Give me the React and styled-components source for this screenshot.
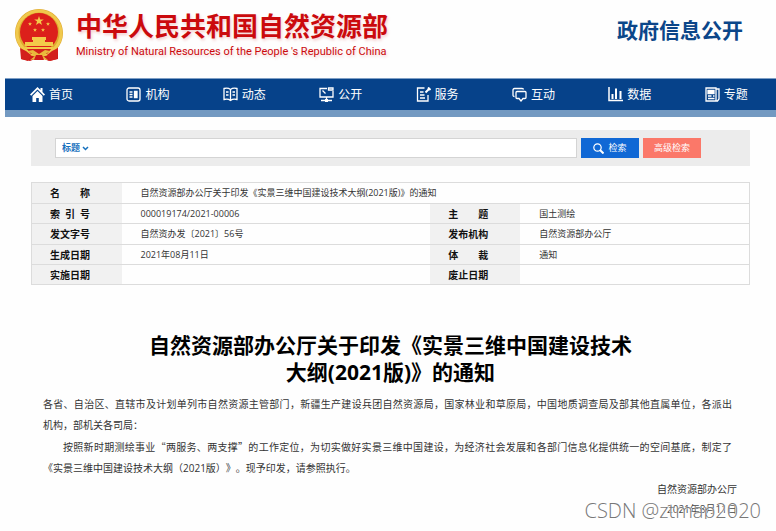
import React from "react";
import styled, { createGlobalStyle } from "styled-components";

const GlobalStyle = createGlobalStyle`
  *, *::before, *::after { box-sizing: border-box; }
  body {
    margin: 0;
    background: #fefefe;
    color: #333;
    font-family: "Open Sans", "Noto Sans CJK SC", sans-serif;
    text-spacing-trim: space-all;
  }
  button, input, select { font: inherit; }
`;

const Page = styled.div`
  padding-left: 5px;
`;

const Header = styled.header`
  display: flex;
  align-items: flex-start;
  height: 78px;
  padding: 8px 33px 0 8px;
`;

const Brand = styled.div`
  flex: 1;
  margin-left: 11px;
  color: #cb0a0d;
  text-shadow: 1px 2px 3px #cb0a0d30;
  white-space: nowrap;
`;

const Ministry = styled.h1`
  margin: 0;
  font-size: 26px;
  line-height: 36px;
  font-weight: 700;
`;

const MinistryEnglish = styled.p`
  margin: 0;
  font-family: Roboto, sans-serif;
  font-size: 11px;
  line-height: 16px;
`;

const Section = styled.p`
  margin: 7px 0 0;
  color: #0b4689;
  font-size: 21px;
  line-height: 30px;
  font-weight: 700;
  white-space: nowrap;
`;

const Nav = styled.nav`
  display: grid;
  grid-template-columns: repeat(8, 1fr);
  height: 39px;
  background: #06428a;
  border-top: 1px solid #7f9fc5;
  border-bottom: 7px solid #7399c1;
`;

const NavLink = styled.a`
  display: flex;
  align-items: center;
  gap: 4px;
  padding-left: 25px;
  color: #fff;
  font-size: 12px;
  line-height: 18px;
  text-decoration: none;
  white-space: nowrap;
`;

const Content = styled.main`
  padding: 13px 26px 0;
`;

const SearchBar = styled.form`
  display: flex;
  align-items: center;
  gap: 4px;
  height: 36px;
  padding: 0 49px 0 24px;
  background: #ececec;
`;

const Field = styled.div`
  display: flex;
  align-items: center;
  flex: 1;
  height: 20px;
  padding-left: 6px;
  background: #fff;
  border: 1px solid #d4d4d4;
`;

const FieldSelect = styled.select`
  appearance: none;
  width: 20px;
  padding: 0;
  border: 0;
  background: transparent;
  color: #1670bd;
  font-size: 9px;
  line-height: 16px;
  font-weight: 700;
`;

const FieldInput = styled.input`
  flex: 1;
  min-width: 0;
  height: 16px;
  border: 0;
  outline: 0;
  background: transparent;
  font-size: 9px;
`;

const Button = styled.button`
  display: flex;
  align-items: center;
  justify-content: center;
  gap: 4px;
  width: 58px;
  height: 20px;
  padding: 0;
  border: 0;
  background: ${(p) => (p.$accent ? "#fb7869" : "#1068d5")};
  color: #fff;
  font-size: 9px;
  line-height: 16px;
`;

const Info = styled.table`
  width: 100%;
  margin-top: 16px;
  border: 1px solid #dcdcdc;
  border-collapse: collapse;
  table-layout: fixed;
  line-height: 16px;
`;

const LabelCol = styled.col`
  width: 90px;
`;

const WideCol = styled.col`
  width: 43%;
`;

const InfoRow = styled.tr`
  height: ${(p) => (p.$tall ? 21 : 20)}px;
  border-bottom: 1px solid #dcdcdc;
`;

const Label = styled.th`
  padding: 0 0 0 18px;
  background: #f1f1f1;
  color: #111;
  font-size: 10px;
`;

const LabelText = styled.span`
  display: block;
  width: 40px;
  text-align: justify;
  text-align-last: justify;
`;

const Value = styled.td`
  padding: 0 0 0 19px;
  font-size: 9px;
  white-space: nowrap;
`;

const Title = styled.h2`
  margin: 47px 0 0;
  color: #000;
  font-size: 21px;
  line-height: 27px;
  font-weight: 700;
  text-align: center;
`;

const Article = styled.article`
  padding: 8px 18px 0 12px;
  font-size: 10px;
  line-height: 21px;
`;

const Line = styled.p`
  margin: 0;
  text-indent: ${(p) => (p.$indent ? "2em" : "0")};
  text-align: justify;
  text-align-last: ${(p) => (p.$full ? "justify" : "start")};
  white-space: nowrap;
`;

const Quote = styled.span`
  font-family: "Noto Sans CJK SC", sans-serif;
`;

const Signature = styled.footer`
  position: relative;
  display: flex;
  flex-direction: column;
  align-items: flex-end;
  padding-right: 13px;
  font-size: 10px;
  line-height: 20px;
`;

const DateLine = styled.time`
  color: #444;
`;

const Watermark = styled.span`
  position: absolute;
  right: -11px;
  bottom: -6px;
  color: #777;
  font-family: "Open Sans", sans-serif;
  font-size: 20px;
  line-height: 28px;
  font-weight: 300;
  text-shadow: 0 0 1px #fff, 0 0 2px #fff;
  white-space: nowrap;
`;

function Emblem() {
  const star = "M0-5 1.2-1.6H4.8L1.9.5 3 4 0 1.9-3 4-1.9.5-4.8-1.6H-1.2Z";
  return (
    <svg width="52" height="56" viewBox="0 0 52 56" role="img" aria-label="国徽">
      <path d="M8 37v14l9 2 5-2h9l5 2 9-2V37Z" fill="#cf1a1a" />
      <circle cx="26" cy="25" r="24" fill="#dfa92e" />
      <circle cx="26" cy="25" r="22" fill="none" stroke="#f0c94d" strokeWidth="3" />
      <circle cx="26" cy="24" r="19" fill="#dc201b" />
      <g fill="#f3cb4a">
        <path d={star} transform="translate(26 13)" />
        <path d={star} transform="translate(17 16) scale(.42)" />
        <path d={star} transform="translate(35 16) scale(.42)" />
        <path d={star} transform="translate(22 22) scale(.42)" />
        <path d={star} transform="translate(30 22) scale(.42)" />
        <path d="M19 29h14v3H19ZM20 32h12v2H20ZM12 34h28v4H12ZM11 39h30l-2 2H13Z" />
      </g>
      <path d="M14 41h24l-4 5H18Z" fill="#d3201c" />
      <path d="m7 40 6 3 5 4-3 6-7-2ZM45 40l-6 3-5 4 3 6 7-2Z" fill="#d3201c" />
      <path d="m15 43 5-1 6 4 6-4 5 1-7 5 5 4-7-1-2 1-2-1-7 1 5-4Z" fill="#e9b93b" />
      <path d="M23 47h6l2 5H21Z" fill="#cf1a1a" />
    </svg>
  );
}

const icons = {
  home: (
    <g fill="currentColor" stroke="none">
      <path d="M7.500 0 0 7.500 1.200 8.700 7.500 2.400l6.300 6.300L15 7.500l-2.500-2.500V1h-2v2Z" />
      <path d="m7.500 4.100-5 5V15h3.700v-4h2.600v4h3.700V9.100Z" />
    </g>
  ),
  org: (
    <g>
      <rect x="1" y="1" width="13" height="13" rx="2" />
      <path d="M3.500 5h3M3.500 7.500h3M3.500 10h3" />
      <path d="M8.500 4.500h2.500v6H8.500Z" fill="currentColor" />
    </g>
  ),
  book: (
    <g>
      <path d="M7.500 2.500Q5 .5 1 1.500v11q4-1 6.500 1 2.500-2 6.500-1v-11q-4-1-6.500 1v11" />
      <path d="M3 5h2.500M3 8h2.500M9.500 5H12M9.500 8H12" />
    </g>
  ),
  screen: (
    <g>
      <path d="M8 1.500H1V10h13V4M7.500 10v3M2 13.500h11" />
      <path d="m3.500 3.500 3 3M9.500 1h4.500v2h-4.500Z" />
      <path d="M6 12h3v3H6Z" fill="currentColor" stroke="none" />
    </g>
  ),
  service: (
    <g>
      <path d="M8.500 1H1.500v13h10.500V8M4 5h3.500M4 8h4.500M4 11h5" />
      <path d="m9.500 5.500 4-4M12 .5l2.500 2.500" strokeWidth="2" />
    </g>
  ),
  chat: (
    <g>
      <path d="M5 4.500h8q1 0 1 1v5q0 1-1 1h-2L9 14l-2-2.500H5q-1 0-1-1v-5q0-1 1-1Z" />
      <path d="M2.500 9.500Q1 9.500 1 8V3q0-1.500 1.500-1.500h7.500q1.500 0 1.500 1" />
    </g>
  ),
  chart: (
    <g>
      <path d="M1 0v13.500h14" strokeWidth="1.500" />
      <path d="M4.500 7v5M8 1.500V12M12.500 4v8" strokeWidth="2" />
    </g>
  ),
  news: (
    <g>
      <path d="M1 1h10v13H1ZM11 2h3v10l-1.500 2H11" />
      <path d="M3 3.500h6v3H3Z" fill="currentColor" />
      <path d="M3 9h3.500M8 9h1.500M3 11.500h6.500" />
    </g>
  ),
};

function NavIcon({ name }) {
  return (
    <svg width="15" height="15" viewBox="0 0 15 15" fill="none" stroke="currentColor" strokeWidth="1.300" aria-hidden="true">
      {icons[name]}
    </svg>
  );
}

const navItems = [
  ["首页", "home"],
  ["机构", "org"],
  ["动态", "book"],
  ["公开", "screen"],
  ["服务", "service"],
  ["互动", "chat"],
  ["数据", "chart"],
  ["专题", "news"],
];

const infoRows = [
  ["索引号", "000019174/2021-00006", "主题", "国土测绘"],
  ["发文字号", "自然资办发〔2021〕56号", "发布机构", "自然资源部办公厅"],
  ["生成日期", "2021年08月11日", "体裁", "通知"],
  ["实施日期", "", "废止日期", ""],
];

function InfoLabel({ children }) {
  return (
    <Label scope="row">
      <LabelText>{children}</LabelText>
    </Label>
  );
}

export default function App() {
  return (
    <Page lang="zh-CN">
      <GlobalStyle />
      <Header>
        <Emblem />
        <Brand>
          <Ministry>中华人民共和国自然资源部</Ministry>
          <MinistryEnglish lang="en">Ministry of Natural Resources of the People 's Republic of China</MinistryEnglish>
        </Brand>
        <Section>政府信息公开</Section>
      </Header>
      <Nav>
        {navItems.map(([label, icon]) => (
          <NavLink href="#" key={label}>
            <NavIcon name={icon} />
            {label}
          </NavLink>
        ))}
      </Nav>
      <Content>
        <SearchBar onSubmit={(e) => e.preventDefault()}>
          <Field>
            <FieldSelect aria-label="检索范围">
              <option>标题</option>
            </FieldSelect>
            <svg width="7" height="5" viewBox="0 0 7 5" fill="none" stroke="#1670bd" strokeWidth="1.500" aria-hidden="true">
              <path d="m1 1 2.500 2.500L6 1" />
            </svg>
            <FieldInput type="text" aria-label="检索词" />
          </Field>
          <Button type="submit">
            <svg width="11" height="11" viewBox="0 0 11 11" fill="none" stroke="currentColor" aria-hidden="true">
              <circle cx="4.500" cy="4.500" r="3.700" strokeWidth="1.200" />
              <path d="m7 7 3.500 3.500" strokeWidth="2" />
            </svg>
            检索
          </Button>
          <Button type="button" $accent>高级检索</Button>
        </SearchBar>
        <Info>
          <colgroup>
            <LabelCol />
            <WideCol />
            <LabelCol />
            <col />
          </colgroup>
          <tbody>
            <InfoRow $tall>
              <InfoLabel>名称</InfoLabel>
              <Value colSpan={3}>自然资源部办公厅关于印发《实景三维中国建设技术大纲(2021版)》的通知</Value>
            </InfoRow>
            {infoRows.map(([a, b, c, d], i) => (
              <InfoRow key={a} $tall={i === 1}>
                <InfoLabel>{a}</InfoLabel>
                <Value>{b}</Value>
                <InfoLabel>{c}</InfoLabel>
                <Value>{d}</Value>
              </InfoRow>
            ))}
          </tbody>
        </Info>
        <Title>
          自然资源部办公厅关于印发《实景三维中国建设技术
          <br />
          大纲(2021版)》的通知
        </Title>
        <Article>
          <Line $full>各省、自治区、直辖市及计划单列市自然资源主管部门，新疆生产建设兵团自然资源局，国家林业和草原局，中国地质调查局及部其他直属单位，各派出</Line>
          <Line>机构，部机关各司局：</Line>
          <Line $full $indent>
            按照新时期测绘事业<Quote>“</Quote>两服务、两支撑<Quote>”</Quote>的工作定位，为切实做好实景三维中国建设，为经济社会发展和各部门信息化提供统一的空间基底，制定了
          </Line>
          <Line>《实景三维中国建设技术大纲（2021版）》。现予印发，请参照执行。</Line>
        </Article>
        <Signature>
          <span>自然资源部办公厅</span>
          <DateLine dateTime="2021-08-11">2021年8月11日</DateLine>
          <Watermark>CSDN @ztmap2020</Watermark>
        </Signature>
      </Content>
    </Page>
  );
}
